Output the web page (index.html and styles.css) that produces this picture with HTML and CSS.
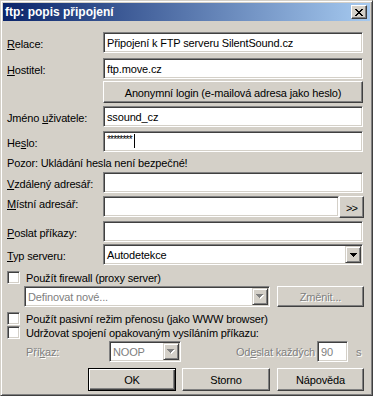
FILE: index.html
```html
<!DOCTYPE html>
<html lang="cs">
<head>
  <meta charset="UTF-8">
  <title>ftp: popis připojení</title>
  <link rel="stylesheet" href="styles.css">
</head>
<body>
  <div class="window">
    <div class="titlebar">
      <span class="title">ftp: popis připojení</span>
      <span class="close">
        <svg width="8" height="7" viewBox="0 0 8 7" shape-rendering="crispEdges"><path d="M0 0h2v1h-2z M6 0h2v1h-2z M1 1h2v1h-2z M5 1h2v1h-2z M2 2h4v1h-4z M3 3h2v1h-2z M2 4h4v1h-4z M1 5h2v1h-2z M5 5h2v1h-2z M0 6h2v1h-2z M6 6h2v1h-2z" fill="#000"/></svg>
      </span>
    </div>

    <div class="content">
      <div class="row r-relace">
        <span class="lbl"><u>R</u>elace:</span>
        <div class="field">Připojení k FTP serveru SilentSound.cz</div>
      </div>
      <div class="row r-host">
        <span class="lbl"><u>H</u>ostitel:</span>
        <div class="field">ftp.move.cz</div>
      </div>
      <div class="row r-anon">
        <span class="lbl"></span>
        <div class="btn btn-anon">Anonymní login (e-mailová adresa jako heslo)</div>
      </div>
      <div class="row r-user">
        <span class="lbl">Jméno <u>u</u>živatele:</span>
        <div class="field">ssound_cz</div>
      </div>
      <div class="row r-pass">
        <span class="lbl">He<u>s</u>lo:</span>
        <div class="field field-pass"><span class="stars">********</span><span class="caret"></span></div>
      </div>
      <div class="row r-warn">Pozor: Ukládání hesla není bezpečné!</div>
      <div class="row r-remote">
        <span class="lbl"><u>V</u>zdálený adresář:</span>
        <div class="field"></div>
      </div>
      <div class="row r-local">
        <span class="lbl"><u>M</u>ístní adresář:</span>
        <div class="field field-local"></div>
        <div class="btn btn-browse">&gt;&gt;</div>
      </div>
      <div class="row r-cmd">
        <span class="lbl"><u>P</u>oslat příkazy:</span>
        <div class="field"></div>
      </div>
      <div class="row r-type">
        <span class="lbl"><u>T</u>yp serveru:</span>
        <div class="field combo">
          <span class="combo-text">Autodetekce</span>
          <span class="arrow">
            <svg width="7" height="4" viewBox="0 0 7 4" shape-rendering="crispEdges"><path d="M0 0h7v1h-7z M1 1h5v1h-5z M2 2h3v1h-3z M3 3h1v1h-1z" fill="#000"/></svg>
          </span>
        </div>
      </div>

      <div class="row r-firewall">
        <span class="check"></span>
        <span>Použít firewall (proxy server)</span>
      </div>
      <div class="row r-proxy">
        <div class="field combo combo-proxy">
          <span class="combo-text disabled">Definovat nové...</span>
          <span class="arrow">
            <svg width="8" height="5" viewBox="0 0 8 5" shape-rendering="crispEdges"><path d="M1 1h7v1h-7z M2 2h5v1h-5z M3 3h3v1h-3z M4 4h1v1h-1z" fill="#fff"/><path d="M0 0h7v1h-7z M1 1h5v1h-5z M2 2h3v1h-3z M3 3h1v1h-1z" fill="#808080"/></svg>
          </span>
        </div>
        <div class="btn btn-change disabled">Změnit...</div>
      </div>
      <div class="row r-passive">
        <span class="check"></span>
        <span>Použít pasivní režim přenosu (jako WWW browser)</span>
      </div>
      <div class="row r-keep">
        <span class="check"></span>
        <span>Udržovat spojení opakovaným vysíláním příkazu:</span>
      </div>
      <div class="row r-keepopts">
        <span class="lbl-cmd disabled">Pří<u>k</u>az:</span>
        <div class="field combo combo-noop">
          <span class="combo-text disabled">NOOP</span>
          <span class="arrow">
            <svg width="8" height="5" viewBox="0 0 8 5" shape-rendering="crispEdges"><path d="M1 1h7v1h-7z M2 2h5v1h-5z M3 3h3v1h-3z M4 4h1v1h-1z" fill="#fff"/><path d="M0 0h7v1h-7z M1 1h5v1h-5z M2 2h3v1h-3z M3 3h1v1h-1z" fill="#808080"/></svg>
          </span>
        </div>
        <span class="spacer"></span>
        <span class="lbl-every disabled">Od<u>e</u>slat každých</span>
        <div class="field field-num disabled">90</div>
        <span class="unit disabled">s</span>
      </div>

      <div class="row r-buttons">
        <div class="btn btn-ok">OK</div>
        <div class="btn btn-cancel">Storno</div>
        <div class="btn btn-help">Nápověda</div>
      </div>
    </div>
  </div>
</body>
</html>
```

FILE: styles.css
```css
html, body {
  margin: 0;
  padding: 0;
}
body {
  width: 373px;
  height: 396px;
  background-color: #d4d0c8;
  font-family: "Liberation Sans", Arial, sans-serif;
  font-size: 11px;
  letter-spacing: -0.15px;
  color: #000;
  overflow: hidden;
}
u {
  text-decoration-thickness: 1px;
  text-underline-offset: 1px;
}

/* okno */
.window {
  box-sizing: border-box;
  width: 373px;
  height: 396px;
  border: 1px solid;
  border-color: #d4d0c8 #404040 #404040 #d4d0c8;
  box-shadow: inset 1px 1px #fff, inset -1px -1px #808080;
  padding: 2px;
  background-color: #d4d0c8;
}
.titlebar {
  height: 18px;
  display: flex;
  align-items: center;
  padding-left: 2px;
  background: linear-gradient(to right, #0a246a, #a6caf0);
}
.title {
  color: #fff;
  font-weight: bold;
  font-size: 12px;
  letter-spacing: 0;
}
.close {
  margin-left: auto;
  margin-right: 3px;
  box-sizing: border-box;
  width: 16px;
  height: 14px;
  display: flex;
  align-items: center;
  justify-content: center;
  background-color: #d4d0c8;
  border: 1px solid;
  border-color: #fff #404040 #404040 #fff;
  box-shadow: inset -1px -1px #808080;
  padding-right: 1px;
}
.close svg {
  display: block;
}

/* obsah */
.content {
  padding: 11px 6px 0 4px;
  display: flex;
  flex-direction: column;
}
.row {
  display: flex;
  align-items: center;
  white-space: nowrap;
}
.lbl {
  width: 96px;
  flex: none;
  padding-top: 2px;
}

.field {
  box-sizing: border-box;
  width: 260px;
  height: 21px;
  flex: none;
  background-color: #fff;
  border: 1px solid;
  border-color: #808080 #fff #fff #808080;
  box-shadow: inset 1px 1px #404040, inset -1px -1px #d4d0c8;
  padding: 2px 3px 0;
  line-height: 17px;
  overflow: hidden;
}
.field-pass {
  display: flex;
  align-items: flex-start;
}
.stars {
  font-size: 10px;
  letter-spacing: -0.8px;
  line-height: 12px;
}
.caret {
  width: 1px;
  height: 14px;
  margin-left: 2px;
  margin-top: 0;
  background-color: #000;
}
.field-local {
  width: 236px;
}

.btn {
  box-sizing: border-box;
  flex: none;
  display: flex;
  align-items: center;
  justify-content: center;
  background-color: #d4d0c8;
  border: 1px solid;
  border-color: #fff #404040 #404040 #fff;
  box-shadow: inset -1px -1px #808080;
  padding-top: 1px;
}
.btn-anon {
  width: 260px;
  height: 22px;
}
.btn-browse {
  width: 25px;
  height: 22px;
  letter-spacing: -1px;
}

.combo {
  display: flex;
  align-items: stretch;
  padding: 1px;
}
.combo-text {
  flex: 1;
  padding-left: 2px;
  padding-top: 1px;
  line-height: 17px;
}
.arrow {
  box-sizing: border-box;
  width: 16px;
  display: flex;
  align-items: center;
  justify-content: center;
  background-color: #d4d0c8;
  border: 1px solid;
  border-color: #d4d0c8 #404040 #404040 #d4d0c8;
  box-shadow: inset 1px 1px #fff, inset -1px -1px #808080;
}
.arrow svg {
  display: block;
}

.check {
  box-sizing: border-box;
  width: 13px;
  height: 13px;
  flex: none;
  margin-right: 6px;
  background-color: #fff;
  border: 1px solid;
  border-color: #808080 #fff #fff #808080;
  box-shadow: inset 1px 1px #404040, inset -1px -1px #d4d0c8;
}

.disabled {
  color: #808080;
  text-shadow: 1px 1px 0 #fff;
}

/* rozmisteni radku */
.r-relace { height: 21px; }
.r-host { height: 21px; margin-top: 5px; }
.r-anon { height: 22px; margin-top: 2px; }
.r-user { height: 21px; margin-top: 3px; }
.r-pass { height: 21px; margin-top: 4px; }
.r-warn { height: 20px; padding-top: 1px; box-sizing: border-box; }
.r-remote { height: 21px; }
.r-local { height: 22px; margin-top: 3px; align-items: flex-start; }
.r-cmd { height: 21px; margin-top: 3px; }
.r-type { height: 21px; margin-top: 2px; }
.r-firewall { height: 13px; margin-top: 6px; }
.r-proxy { height: 21px; margin-top: 2px; padding-left: 17px; }
.r-passive { height: 13px; margin-top: 5px; }
.r-keep { height: 13px; margin-top: 1px; }
.r-keepopts { height: 21px; margin-top: 2px; }
.r-buttons { height: 23px; margin-top: 6px; justify-content: flex-end; gap: 6px; }

.combo-proxy {
  width: 246px;
}
.btn-change {
  width: 87px;
  height: 21px;
  margin-left: auto;
}
.lbl-cmd {
  width: 83px;
  padding-left: 19px;
  flex: none;
}
.combo-noop {
  width: 72px;
}
.spacer {
  flex: 1;
}
.lbl-every {
  margin-right: 2px;
}
.field-num {
  width: 31px;
}
.unit {
  width: 8px;
  margin-left: 8px;
}

.btn-ok {
  width: 88px;
  height: 23px;
  border-color: #000;
  box-shadow: inset 1px 1px #fff, inset -1px -1px #404040, inset -2px -2px #808080;
}
.btn-cancel {
  width: 88px;
  height: 23px;
}
.btn-help {
  width: 87px;
  height: 23px;
  margin-left: 1px;
}
```
